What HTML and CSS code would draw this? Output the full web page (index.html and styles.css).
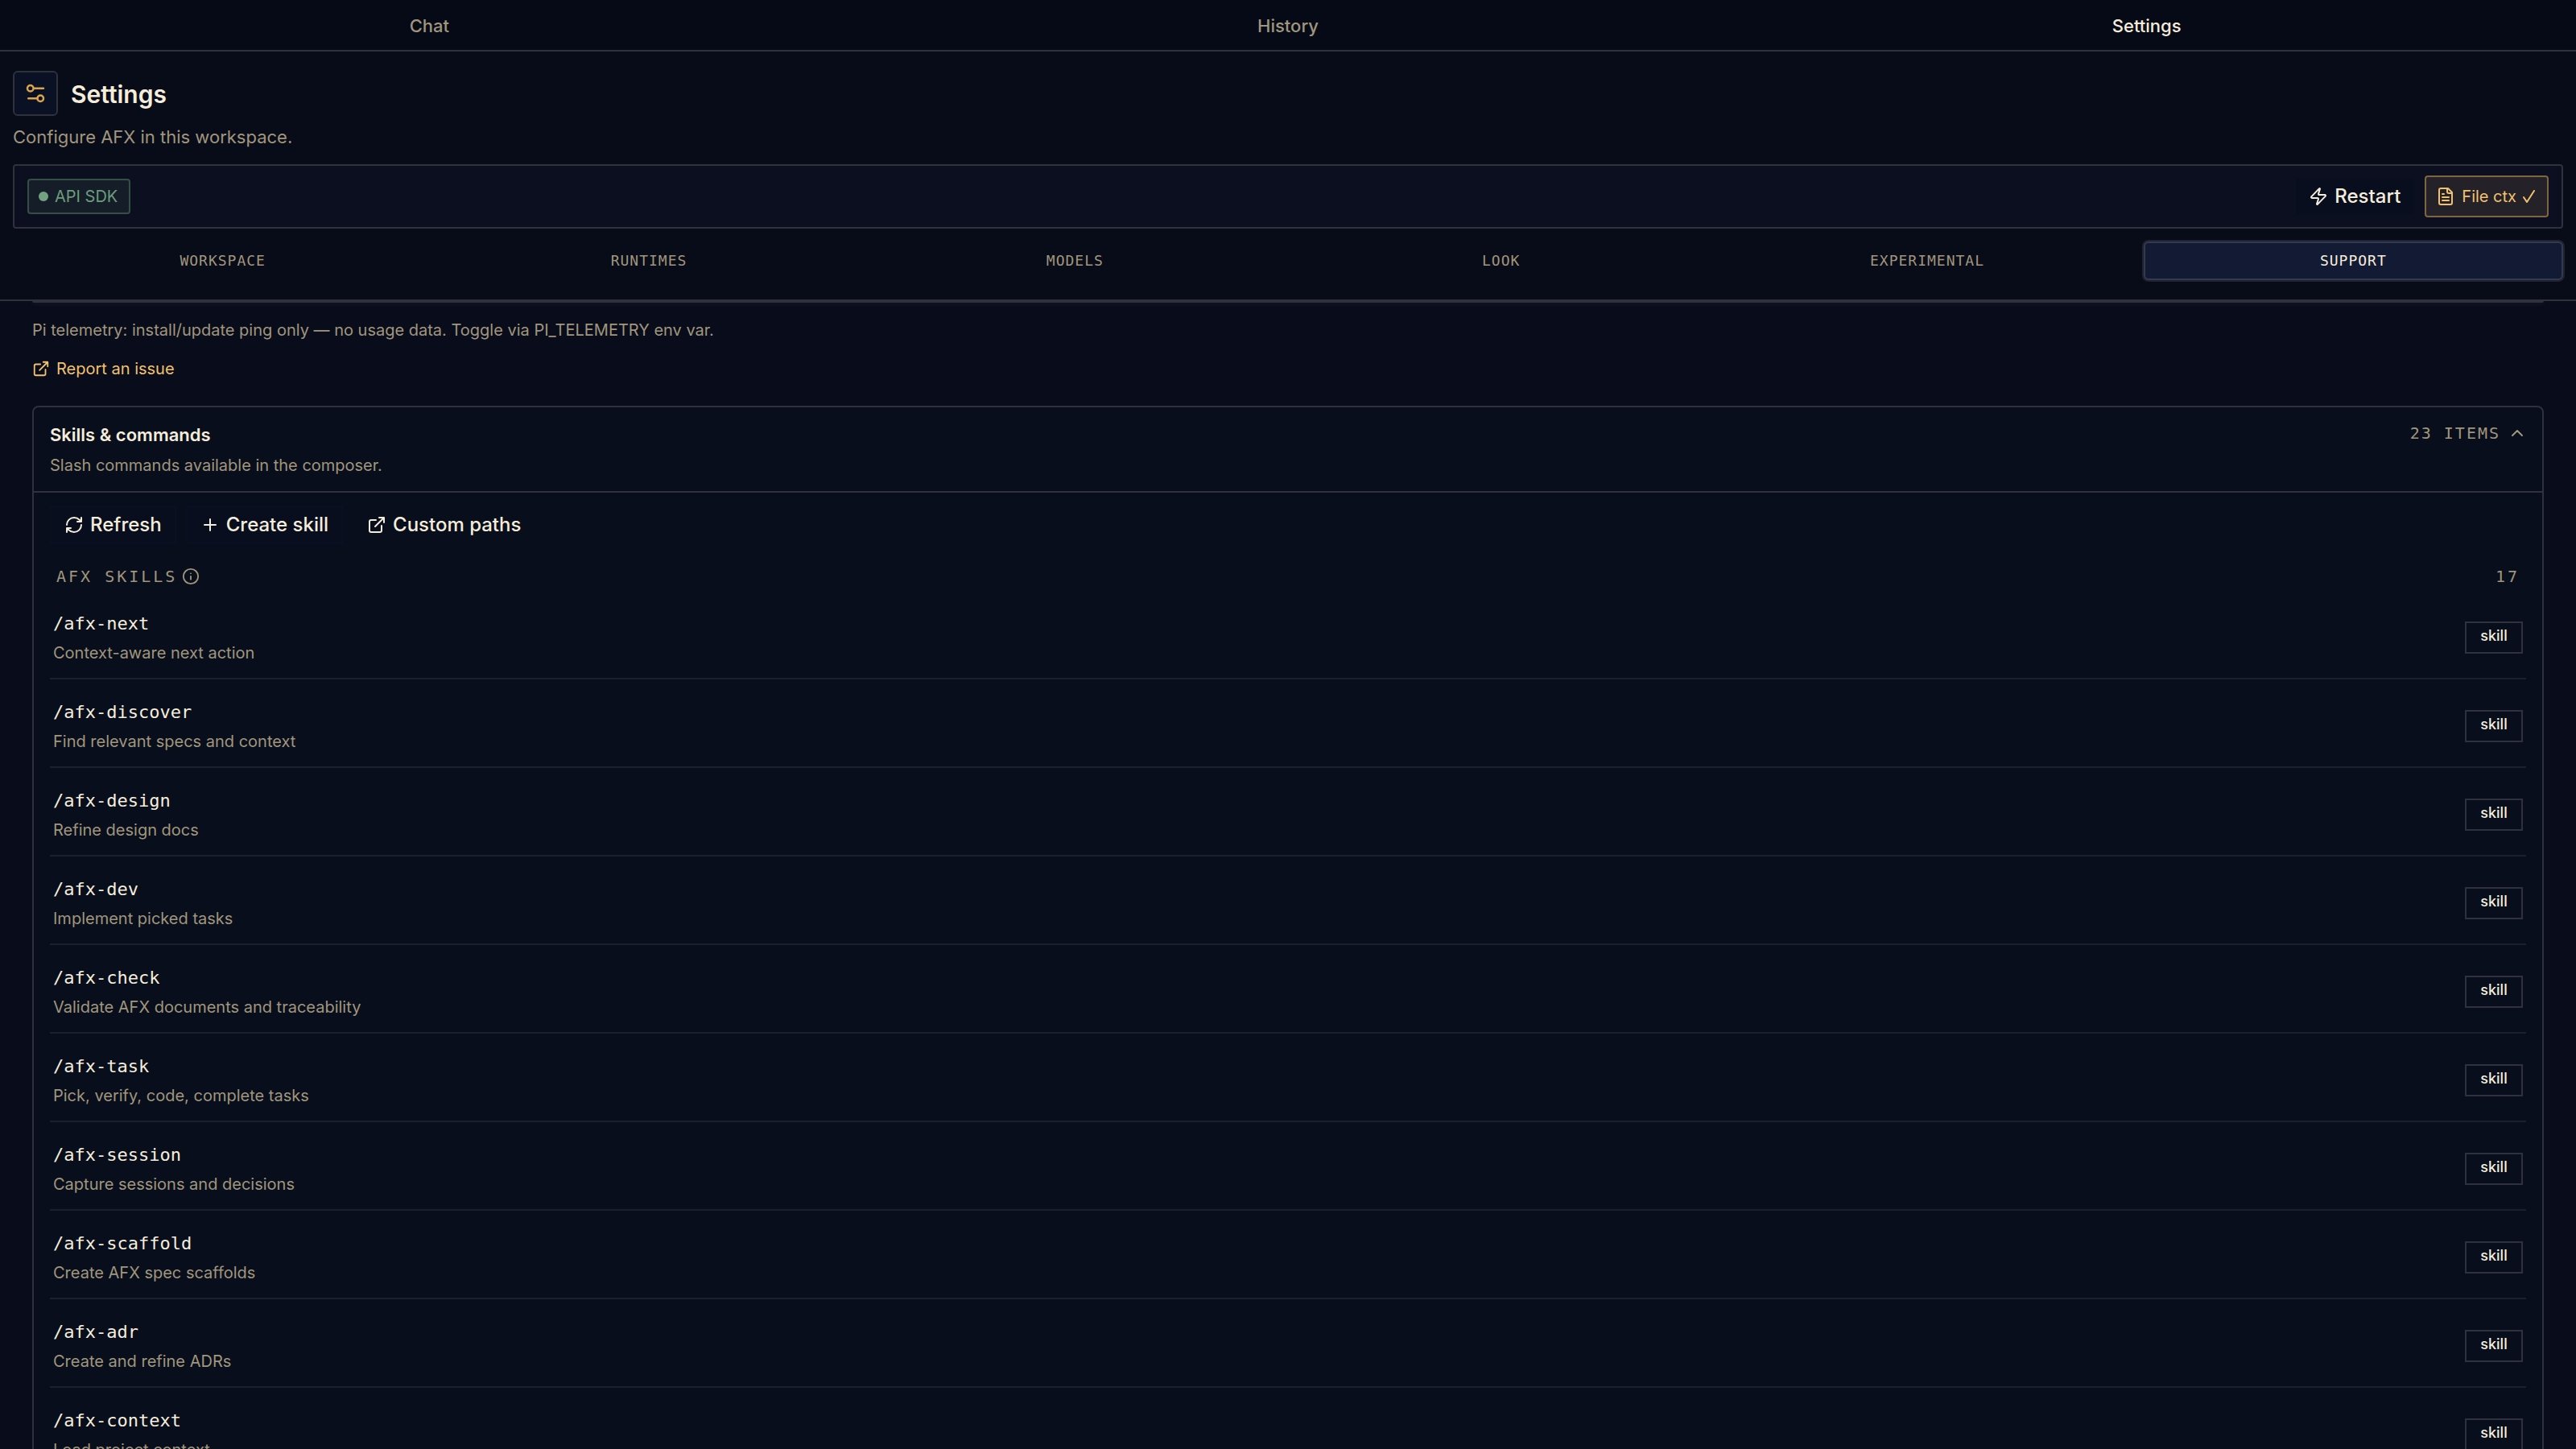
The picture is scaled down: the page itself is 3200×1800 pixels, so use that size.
FILE: index.html
```html
<!DOCTYPE html>
<html lang="en">
<head>
<meta charset="utf-8">
<title>AFX Settings</title>
<link rel="stylesheet" href="styles.css">
</head>
<body>
<svg class="sprite" aria-hidden="true">
  <symbol id="external" viewBox="0 0 24 24"><path d="M15 3h6v6M10 14 21 3M18 13v6a2 2 0 0 1-2 2H5a2 2 0 0 1-2-2V8a2 2 0 0 1 2-2h6"/></symbol>
</svg>
<nav class="views">
  <button class="view" type="button">Chat</button>
  <button class="view" type="button">History</button>
  <button class="view view-active" type="button">Settings</button>
</nav>
<header class="header">
  <div class="heading">
    <span class="heading-icon"><svg class="icon icon-30" viewBox="0 0 24 24"><path d="M20 7h-9M14 17H5"/><circle cx="17" cy="17" r="3"/><circle cx="7" cy="7" r="3"/></svg></span>
    <h1 class="title">Settings</h1>
  </div>
  <p class="subtitle">Configure AFX in this workspace.</p>
  <div class="status">
    <span class="sdk"><span class="dot"></span>API SDK</span>
    <div class="status-actions">
      <button class="button" type="button"><svg class="icon icon-24" viewBox="0 0 24 24"><path d="M4 14a1 1 0 0 1-.78-1.63l9.9-10.2a.5.5 0 0 1 .86.46l-1.92 6.02A1 1 0 0 0 13 10h7a1 1 0 0 1 .78 1.63l-9.9 10.2a.5.5 0 0 1-.86-.46l1.92-6.02A1 1 0 0 0 11 14z"/></svg>Restart</button>
      <button class="context" type="button"><svg class="icon icon-24" viewBox="0 0 24 24"><path d="M15 2H6a2 2 0 0 0-2 2v16a2 2 0 0 0 2 2h12a2 2 0 0 0 2-2V7zM14 2v4a2 2 0 0 0 2 2h4M10 9H8M16 13H8M16 17H8"/></svg>File ctx <svg class="check" viewBox="0 0 16 16"><path d="M1 9 5 15 14 1"/></svg></button>
    </div>
  </div>
  <div class="tabs">
    <button class="tab" type="button">WORKSPACE</button>
    <button class="tab" type="button">RUNTIMES</button>
    <button class="tab" type="button">MODELS</button>
    <button class="tab" type="button">LOOK</button>
    <button class="tab" type="button">EXPERIMENTAL</button>
    <button class="tab tab-active" type="button">SUPPORT</button>
  </div>
</header>
<main class="content">
  <div class="card-end"></div>
  <p class="telemetry">Pi telemetry: install/update ping only — no usage data. Toggle via PI_TELEMETRY env var.</p>
  <a class="report" href="#report"><svg class="icon icon-22"><use href="#external"/></svg>Report an issue</a>
  <section class="card">
    <div class="card-head">
      <div>
        <h2 class="card-title">Skills &amp; commands</h2>
        <p class="card-text">Slash commands available in the composer.</p>
      </div>
      <button class="count" type="button">23 ITEMS<svg class="chevron" viewBox="0 0 14 8"><path d="M1 7 7 1l6 6"/></svg></button>
    </div>
    <div class="card-body">
      <div class="toolbar">
        <button class="button" type="button"><svg class="icon icon-24" viewBox="0 0 24 24"><path d="M3 12a9 9 0 0 1 9-9 9.75 9.75 0 0 1 6.74 2.74L21 8M21 3v5h-5M21 12a9 9 0 0 1-9 9 9.75 9.75 0 0 1-6.74-2.74L3 16M8 16H3v5"/></svg>Refresh</button>
        <button class="button" type="button"><svg class="icon icon-24" viewBox="0 0 24 24"><path d="M5 12h14M12 5v14"/></svg>Create skill</button>
        <button class="button button-plain" type="button"><svg class="icon icon-24"><use href="#external"/></svg>Custom paths</button>
      </div>
      <div class="group">
        <h3 class="group-title">AFX SKILLS<svg class="icon icon-22" viewBox="0 0 24 24"><circle cx="12" cy="12" r="10"/><path d="M12 16v-4M12 8h.01"/></svg></h3>
        <span>17</span>
      </div>
      <ul class="skills">
        <li class="skill"><div><h4 class="name">/afx-next</h4><p class="about">Context-aware next action</p></div><span class="badge">skill</span></li>
        <li class="skill"><div><h4 class="name">/afx-discover</h4><p class="about">Find relevant specs and context</p></div><span class="badge">skill</span></li>
        <li class="skill"><div><h4 class="name">/afx-design</h4><p class="about">Refine design docs</p></div><span class="badge">skill</span></li>
        <li class="skill"><div><h4 class="name">/afx-dev</h4><p class="about">Implement picked tasks</p></div><span class="badge">skill</span></li>
        <li class="skill"><div><h4 class="name">/afx-check</h4><p class="about">Validate AFX documents and traceability</p></div><span class="badge">skill</span></li>
        <li class="skill"><div><h4 class="name">/afx-task</h4><p class="about">Pick, verify, code, complete tasks</p></div><span class="badge">skill</span></li>
        <li class="skill"><div><h4 class="name">/afx-session</h4><p class="about">Capture sessions and decisions</p></div><span class="badge">skill</span></li>
        <li class="skill"><div><h4 class="name">/afx-scaffold</h4><p class="about">Create AFX spec scaffolds</p></div><span class="badge">skill</span></li>
        <li class="skill"><div><h4 class="name">/afx-adr</h4><p class="about">Create and refine ADRs</p></div><span class="badge">skill</span></li>
        <li class="skill"><div><h4 class="name">/afx-context</h4><p class="about">Load project context</p></div><span class="badge">skill</span></li>
      </ul>
    </div>
  </section>
</main>
</body>
</html>
```
FILE: styles.css
```css
:root {
  --cream: #f5eddb;
  --muted: #a0967d;
  --amber: #f0c270;
  --line: #2f313c;
  --mono: "DejaVu Sans Mono", monospace;
}

* { box-sizing: border-box; }

body {
  margin: 0;
  height: 100vh;
  display: flex;
  flex-direction: column;
  background: #090c1a;
  color: var(--cream);
  font: 400 20px/28px Inter, sans-serif;
  font-optical-sizing: none;
}

h1, h2, h3, h4, p, ul { margin: 0; padding: 0; }
ul { list-style: none; }

button {
  margin: 0;
  padding: 0;
  border: 0;
  background: none;
  color: inherit;
  font: inherit;
  font-optical-sizing: none;
  letter-spacing: inherit;
}

.sprite { position: absolute; width: 0; height: 0; }

.icon, .check, .chevron {
  flex: none;
  fill: none;
  stroke: currentColor;
  stroke-width: 2;
  stroke-linecap: round;
  stroke-linejoin: round;
}
.icon-30 { width: 30px; height: 30px; }
.icon-24 { width: 24px; height: 24px; }
.icon-22 { width: 22px; height: 22px; }

.views {
  flex: none;
  display: grid;
  grid-template-columns: repeat(3, 1fr);
  height: 64px;
  border-bottom: 2px solid var(--line);
  background: #060a16;
}
.view {
  padding-top: 2px;
  color: var(--muted);
  font-size: 22px;
  font-weight: 500;
}
.view-active { color: var(--cream); }

.header {
  flex: none;
  padding: 24px 16px;
  border-bottom: 2px solid var(--line);
  background: #080b18;
}
.heading { display: flex; align-items: center; gap: 16px; }
.heading-icon {
  display: grid;
  place-items: center;
  width: 56px;
  height: 56px;
  border: 2px solid var(--line);
  border-radius: 6px;
  background: #0a1124;
  color: #d9a44c;
}
.title { padding-top: 2px; font-size: 30px; line-height: 36px; font-weight: 600; }
.subtitle { margin-top: 12px; color: var(--muted); font-size: 22px; }

.status {
  display: flex;
  align-items: center;
  justify-content: space-between;
  height: 80px;
  margin-top: 20px;
  padding: 0 16px;
  border: 2px solid var(--line);
  border-radius: 4px;
  background: #0b0f1f;
}
.sdk {
  display: flex;
  align-items: center;
  gap: 8px;
  height: 44px;
  padding: 0 14px 0 12px;
  border: 2px solid #345045;
  border-radius: 4px;
  background: #151d28;
  color: #6b9c7c;
}
.dot { width: 12px; height: 12px; border-radius: 50%; background: #74a082; }
.status-actions { display: flex; align-items: center; gap: 12px; }
.button {
  display: flex;
  align-items: center;
  gap: 8px;
  height: 48px;
  padding: 0 16px;
  border: 2px solid #0a1022;
  background: #080e1e;
  font-size: 24px;
  font-weight: 500;
}
.button-plain { border-color: transparent; background: none; }
.context {
  display: flex;
  align-items: center;
  gap: 8px;
  height: 52px;
  padding: 0 14px 0 12px;
  border: 2px solid #7c653f;
  border-radius: 4px;
  background: #242128;
  color: var(--amber);
}
.check { width: 16px; height: 16px; }

.tabs {
  display: grid;
  grid-template-columns: repeat(6, 1fr);
  gap: 8px;
  margin-top: 16px;
}
.tab {
  height: 48px;
  border-radius: 6px;
  color: var(--muted);
  font-family: var(--mono);
  font-size: 18px;
  letter-spacing: 1px;
}
.tab-active {
  border: 2px solid #333a50;
  background: #131a33;
  box-shadow: 0 0 0 2px #20232f;
  color: var(--cream);
}

.content {
  flex: 1;
  min-height: 0;
  overflow: hidden;
  padding: 0 40px;
}
.card-end {
  height: 2px;
  border-radius: 0 0 4px 4px;
  background: var(--line);
  box-shadow: 0 2px 4px #1a1d29;
}
.telemetry { margin-top: 20px; color: var(--muted); }
.report {
  display: flex;
  align-items: center;
  gap: 8px;
  width: max-content;
  margin-top: 20px;
  color: var(--amber);
  text-decoration: none;
}

.card {
  margin-top: 32px;
  border: 2px solid var(--line);
  border-radius: 8px;
  background: #080e1b;
}
.card-head {
  display: flex;
  align-items: flex-start;
  justify-content: space-between;
  padding: 20px 20px 18px;
  border-bottom: 2px solid var(--line);
}
.card-title { font-size: 22px; line-height: 28px; font-weight: 600; }
.card-text { margin-top: 10px; color: var(--muted); }
.count {
  display: flex;
  align-items: center;
  gap: 14px;
  padding-right: 4px;
  color: var(--muted);
  font-family: var(--mono);
  line-height: 24px;
  letter-spacing: 2px;
}
.chevron { width: 14px; height: 8px; }
.card-body { padding: 16px 20px; }
.toolbar { display: flex; gap: 12px; }
.group {
  display: flex;
  align-items: center;
  justify-content: space-between;
  margin: 26px 0 4px;
  padding: 0 8px;
  color: var(--muted);
  font-family: var(--mono);
  letter-spacing: 3px;
}
.group-title { display: flex; align-items: center; gap: 6px; font-size: 20px; font-weight: 400; }

.skill {
  display: flex;
  align-items: center;
  justify-content: space-between;
  height: 110px;
  padding: 8px 4px 0;
  border-bottom: 2px solid #1c202c;
}
.name { font: 400 22px/32px var(--mono); }
.about { margin-top: 6px; color: var(--muted); }
.badge {
  width: 72px;
  height: 40px;
  border: 2px solid var(--line);
  font-size: 18px;
  line-height: 32px;
  font-weight: 500;
  text-align: center;
}
```
